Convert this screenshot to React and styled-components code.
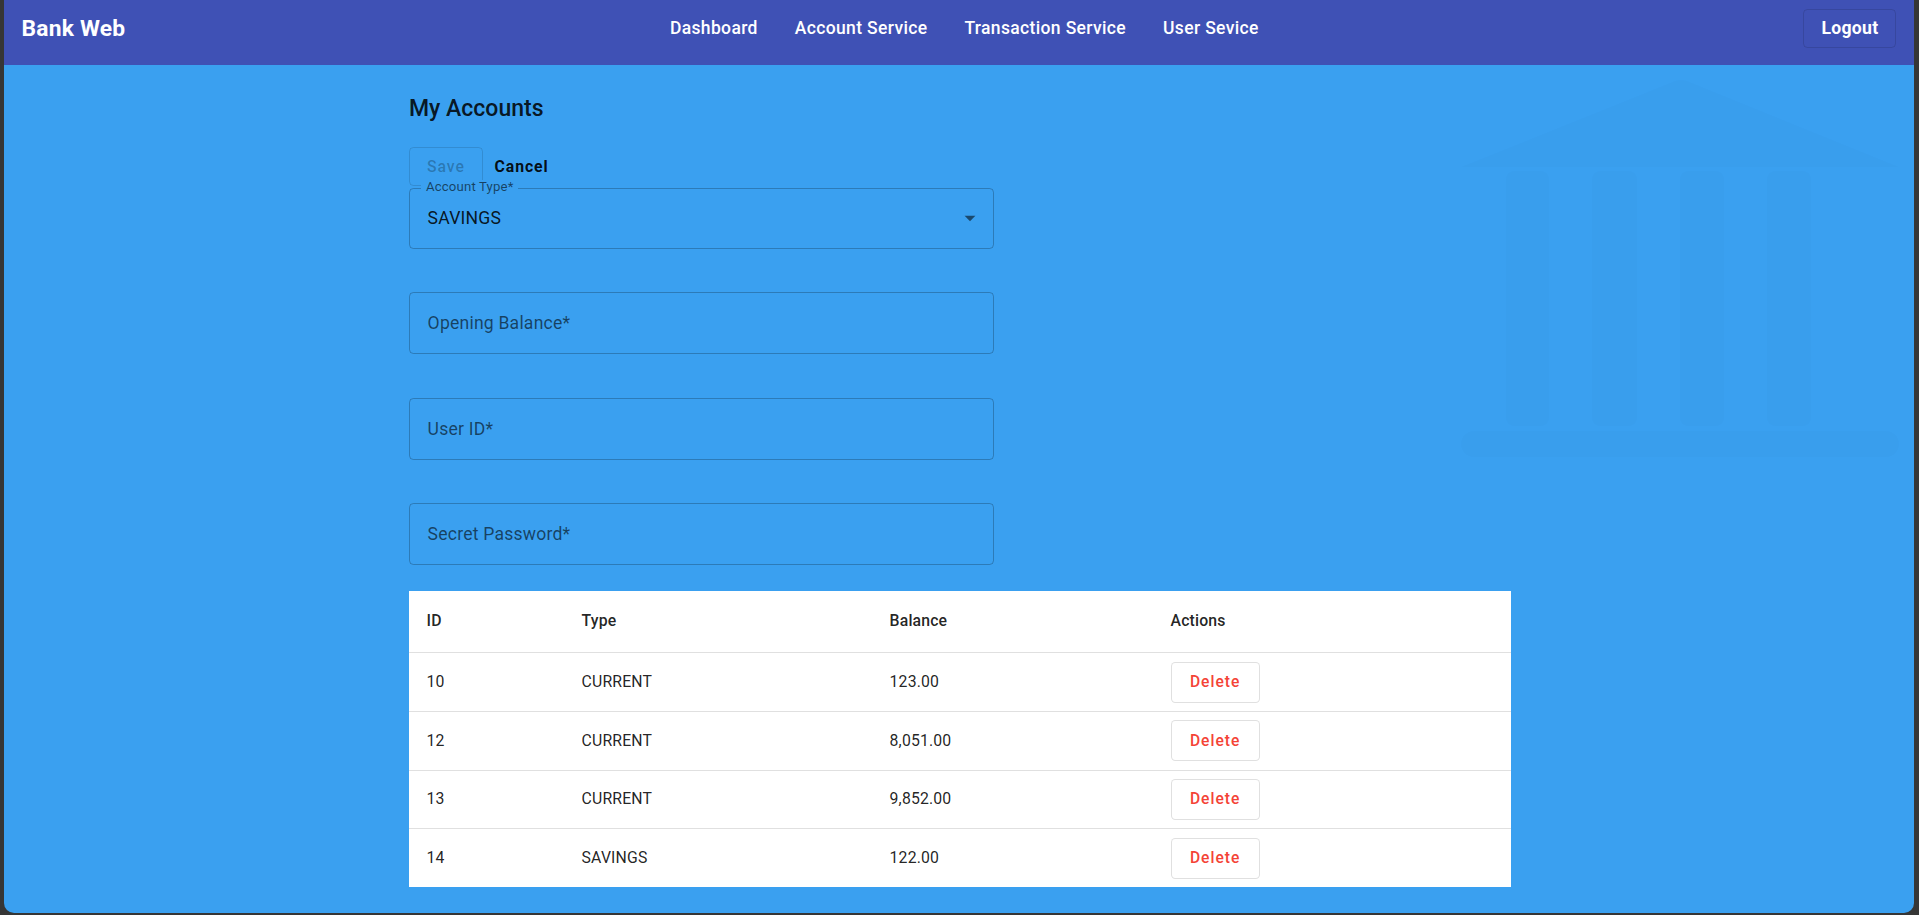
import React from 'react';
import styled, { createGlobalStyle } from 'styled-components';

const GlobalStyle = createGlobalStyle`
	html, body {
		margin: 0;
		padding: 0;
		background: #363636;
		font-family: Roboto, 'Liberation Sans', sans-serif;
	}
	* {
		box-sizing: border-box;
	}
`;

const Frame = styled.div`
	height: 100vh;
	padding: 0 5px 2px 4px;
`;

const Window = styled.div`
	height: 100%;
	display: flex;
	flex-direction: column;
	background: #3aa0f0;
	border-radius: 0 0 10px 10px;
	overflow: hidden;
`;

const Header = styled.header`
	height: 65px;
	flex-shrink: 0;
	display: flex;
	align-items: center;
	justify-content: space-between;
	padding: 0 17.6px 9px;
	background: #3f51b5;
	color: #fff;
`;

const Brand = styled.div`
	font-size: 22.8px;
	font-weight: 700;
	letter-spacing: 0.2px;
`;

const Nav = styled.nav`
	display: flex;
	gap: 37px;
`;

const NavLink = styled.a`
	font-size: 17.5px;
	font-weight: 500;
	letter-spacing: 0.35px;
	color: #fff;
	text-decoration: none;
	cursor: pointer;
`;

const LogoutButton = styled.button`
	height: 39px;
	width: 93px;
	border: 1px solid rgba(0, 0, 0, 0.12);
	border-radius: 4.4px;
	background: transparent;
	color: #fff;
	font-family: inherit;
	font-size: 17.6px;
	font-weight: 700;
	letter-spacing: 0.3px;
	cursor: pointer;
`;

const Main = styled.main`
	flex: 1;
	position: relative;
	overflow: hidden;
`;

const Watermark = styled.svg`
	position: absolute;
	left: 1446px;
	top: 5px;
	width: 450px;
	height: 390px;
	pointer-events: none;
`;

const Content = styled.div`
	position: relative;
	width: 1102px;
	margin: 0 auto;
	padding-top: 26.4px;
	display: flex;
	flex-direction: column;
	transform: translateX(1px);
`;

const Title = styled.h2`
	margin: 0;
	font-size: 23px;
	font-weight: 500;
	line-height: 35px;
	color: rgba(0, 0, 0, 0.87);
`;

const ButtonRow = styled.div`
	display: flex;
	align-items: center;
	gap: 2px;
	margin-top: 20.4px;
`;

const FormButton = styled.button`
	height: 39px;
	padding: 0 ${(p) => (p.$outlined ? '17px' : '8.8px')};
	border: 1px solid ${(p) => (p.$outlined ? 'rgba(0, 0, 0, 0.12)' : 'transparent')};
	border-radius: 4.4px;
	background: transparent;
	color: ${(p) => (p.disabled ? 'rgba(0, 0, 0, 0.26)' : 'rgba(0, 0, 0, 0.92)')};
	font-family: inherit;
	font-size: 15.8px;
	font-weight: ${(p) => (p.disabled ? 500 : 700)};
	letter-spacing: 0.9px;
	cursor: ${(p) => (p.disabled ? 'default' : 'pointer')};
`;

const Field = styled.div`
	position: relative;
	height: ${(p) => p.$height || 62}px;
	margin-top: ${(p) => p.$gap || 0}px;
	width: 585px;
	border: 1px solid rgba(0, 0, 0, 0.23);
	border-radius: 4.4px;
	display: flex;
	align-items: center;
	padding: 0 17.6px;
	font-size: 17.6px;
	letter-spacing: 0.2px;
`;

const Placeholder = styled.span`
	color: rgba(0, 0, 0, 0.6);
`;

const Value = styled.span`
	flex: 1;
	color: rgba(0, 0, 0, 0.87);
`;

const FloatingLabel = styled.label`
	position: absolute;
	left: 11px;
	top: -9px;
	padding: 0 5px;
	background: #3aa0f0;
	font-size: 13.2px;
	line-height: 1;
	letter-spacing: 0.15px;
	color: rgba(0, 0, 0, 0.6);
`;

const Arrow = styled.svg`
	width: 26px;
	height: 26px;
	margin-right: -8px;
	fill: rgba(0, 0, 0, 0.54);
`;

const Table = styled.table`
	margin-top: 25.5px;
	width: 1102px;
	table-layout: fixed;
	border-collapse: collapse;
	background: #fff;
	font-size: 15.8px;
	letter-spacing: 0.15px;
	color: rgba(0, 0, 0, 0.87);
`;

const Th = styled.th`
	width: ${(p) => p.$width}px;
	padding: 17.6px;
	text-align: left;
	font-weight: 500;
	line-height: 26.5px;
	border-bottom: 1px solid #e0e0e0;
`;

const Td = styled.td`
	padding: ${(p) => (p.$action ? '0 17.6px' : '17.6px')};
	line-height: 22.4px;
	vertical-align: middle;
	border-bottom: 1px solid #e0e0e0;

	tr:last-child & {
		border-bottom: none;
	}
`;

const DeleteButton = styled.button`
	height: 41px;
	width: 89px;
	border: 1px solid rgba(0, 0, 0, 0.12);
	border-radius: 4.4px;
	background: #fff;
	color: #f44336;
	font-family: inherit;
	font-size: 15.6px;
	font-weight: 500;
	letter-spacing: 1px;
	cursor: pointer;
`;

const navItems = ['Dashboard', 'Account Service', 'Transaction Service', 'User Sevice'];

const columns = [
	{ label: 'ID', width: 155 },
	{ label: 'Type', width: 308 },
	{ label: 'Balance', width: 281 },
	{ label: 'Actions', width: 358 },
];

const accounts = [
	{ id: 10, type: 'CURRENT', balance: 123 },
	{ id: 12, type: 'CURRENT', balance: 8051 },
	{ id: 13, type: 'CURRENT', balance: 9852 },
	{ id: 14, type: 'SAVINGS', balance: 122 },
];

const fields = ['Opening Balance*', 'User ID*', 'Secret Password*'];

const formatMoney = (n) =>
	n.toLocaleString('en-US', { minimumFractionDigits: 2, maximumFractionDigits: 2 });

const BankMark = () => (
	<Watermark viewBox="0 0 450 390">
		<g fill="rgba(0, 0, 0, 0.012)">
			<path d="M11 97 L225 11 Q231 9 237 11 L449 97 Z" />
			<rect x="56" y="101" width="43" height="255" rx="8" />
			<rect x="142" y="101" width="45" height="255" rx="8" />
			<rect x="230" y="101" width="44" height="255" rx="8" />
			<rect x="317" y="101" width="44" height="255" rx="8" />
			<rect x="11" y="361" width="438" height="26" rx="13" />
		</g>
	</Watermark>
);

const App = () => {
	return (
		<>
			<GlobalStyle />
			<Frame>
				<Window>
					<Header>
						<Brand>Bank Web</Brand>
						<Nav>
							{navItems.map((item) => (
								<NavLink key={item}>{item}</NavLink>
							))}
						</Nav>
						<LogoutButton>Logout</LogoutButton>
					</Header>
					<Main>
						<BankMark />
						<Content>
							<Title>My Accounts</Title>
							<ButtonRow>
								<FormButton $outlined disabled>
									Save
								</FormButton>
								<FormButton>Cancel</FormButton>
							</ButtonRow>
							<Field $height={61} $gap={2}>
								<FloatingLabel>Account Type*</FloatingLabel>
								<Value>SAVINGS</Value>
								<Arrow viewBox="0 0 24 24">
									<path d="M7 10l5 5 5-5z" />
								</Arrow>
							</Field>
							{fields.map((f) => (
								<Field key={f} $gap={43.5}>
									<Placeholder>{f}</Placeholder>
								</Field>
							))}
							<Table>
								<thead>
									<tr>
										{columns.map((c) => (
											<Th key={c.label} $width={c.width}>
												{c.label}
											</Th>
										))}
									</tr>
								</thead>
								<tbody>
									{accounts.map((a) => (
										<tr key={a.id}>
											<Td>{a.id}</Td>
											<Td>{a.type}</Td>
											<Td>{formatMoney(a.balance)}</Td>
											<Td $action>
												<DeleteButton>Delete</DeleteButton>
											</Td>
										</tr>
									))}
								</tbody>
							</Table>
						</Content>
					</Main>
				</Window>
			</Frame>
		</>
	);
};

export default App;
